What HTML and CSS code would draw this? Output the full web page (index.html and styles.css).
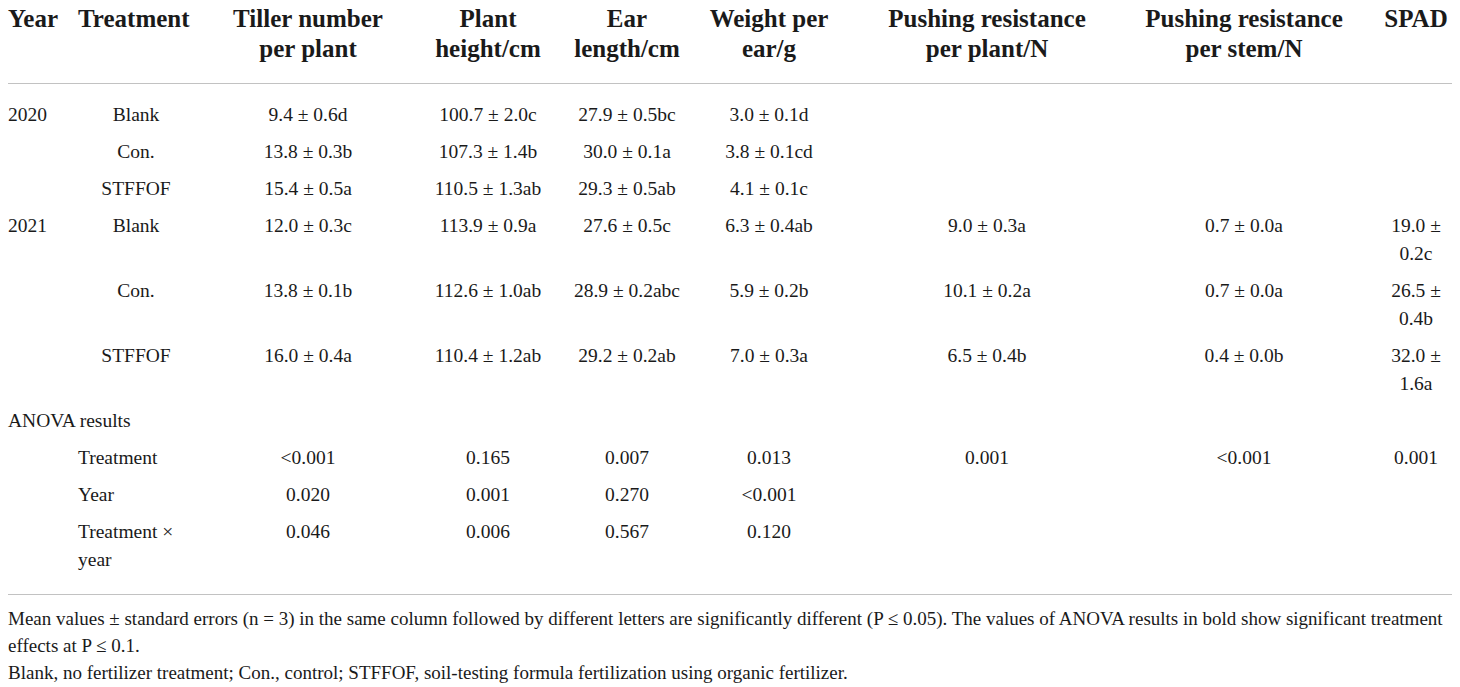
FILE: index.html
```html
<!DOCTYPE html>
<html lang="en">
<head>
    <meta charset="UTF-8">
    <meta name="viewport" content="width=device-width, initial-scale=1.0">
    <title>Table</title>
    <link rel="stylesheet" href="styles.css">
</head>
<body>
    <table class="data-table">
        <colgroup>
            <col class="c-year">
            <col class="c-treat">
            <col class="c-tiller">
            <col class="c-height">
            <col class="c-ear">
            <col class="c-weight">
            <col class="c-push-plant">
            <col class="c-push-stem">
            <col class="c-spad">
        </colgroup>
        <thead>
            <tr>
                <th class="left">Year</th>
                <th class="left pad">Treatment</th>
                <th>Tiller number<br>per plant</th>
                <th>Plant<br>height/cm</th>
                <th>Ear<br>length/cm</th>
                <th>Weight per<br>ear/g</th>
                <th>Pushing resistance<br>per plant/N</th>
                <th>Pushing resistance<br>per stem/N</th>
                <th class="spad">SPAD</th>
            </tr>
        </thead>
        <tbody>
            <tr class="first">
                <td class="left">2020</td>
                <td>Blank</td>
                <td>9.4 ± 0.6d</td>
                <td>100.7 ± 2.0c</td>
                <td>27.9 ± 0.5bc</td>
                <td>3.0 ± 0.1d</td>
                <td></td>
                <td></td>
                <td class="spad"></td>
            </tr>
            <tr>
                <td></td>
                <td>Con.</td>
                <td>13.8 ± 0.3b</td>
                <td>107.3 ± 1.4b</td>
                <td>30.0 ± 0.1a</td>
                <td>3.8 ± 0.1cd</td>
                <td></td>
                <td></td>
                <td class="spad"></td>
            </tr>
            <tr>
                <td></td>
                <td>STFFOF</td>
                <td>15.4 ± 0.5a</td>
                <td>110.5 ± 1.3ab</td>
                <td>29.3 ± 0.5ab</td>
                <td>4.1 ± 0.1c</td>
                <td></td>
                <td></td>
                <td class="spad"></td>
            </tr>
            <tr>
                <td class="left">2021</td>
                <td>Blank</td>
                <td>12.0 ± 0.3c</td>
                <td>113.9 ± 0.9a</td>
                <td>27.6 ± 0.5c</td>
                <td>6.3 ± 0.4ab</td>
                <td>9.0 ± 0.3a</td>
                <td>0.7 ± 0.0a</td>
                <td class="spad">19.0 ± 0.2c</td>
            </tr>
            <tr>
                <td></td>
                <td>Con.</td>
                <td>13.8 ± 0.1b</td>
                <td>112.6 ± 1.0ab</td>
                <td>28.9 ± 0.2abc</td>
                <td>5.9 ± 0.2b</td>
                <td>10.1 ± 0.2a</td>
                <td>0.7 ± 0.0a</td>
                <td class="spad">26.5 ± 0.4b</td>
            </tr>
            <tr>
                <td></td>
                <td>STFFOF</td>
                <td>16.0 ± 0.4a</td>
                <td>110.4 ± 1.2ab</td>
                <td>29.2 ± 0.2ab</td>
                <td>7.0 ± 0.3a</td>
                <td>6.5 ± 0.4b</td>
                <td>0.4 ± 0.0b</td>
                <td class="spad">32.0 ± 1.6a</td>
            </tr>
            <tr>
                <td class="left" colspan="9">ANOVA results</td>
            </tr>
            <tr>
                <td></td>
                <td class="left pad">Treatment</td>
                <td>&lt;0.001</td>
                <td>0.165</td>
                <td>0.007</td>
                <td>0.013</td>
                <td>0.001</td>
                <td>&lt;0.001</td>
                <td class="spad">0.001</td>
            </tr>
            <tr>
                <td></td>
                <td class="left pad">Year</td>
                <td>0.020</td>
                <td>0.001</td>
                <td>0.270</td>
                <td>&lt;0.001</td>
                <td></td>
                <td></td>
                <td class="spad"></td>
            </tr>
            <tr class="last">
                <td></td>
                <td class="left pad">Treatment × year</td>
                <td>0.046</td>
                <td>0.006</td>
                <td>0.567</td>
                <td>0.120</td>
                <td></td>
                <td></td>
                <td class="spad"></td>
            </tr>
        </tbody>
    </table>
    <div class="footnote">
        <p>Mean values ± standard errors (n = 3) in the same column followed by different letters are significantly different (P ≤ 0.05). The values of ANOVA results in bold show significant treatment effects at P ≤ 0.1.</p>
        <p>Blank, no fertilizer treatment; Con., control; STFFOF, soil-testing formula fertilization using organic fertilizer.</p>
    </div>
</body>
</html>
```

FILE: styles.css
```css
body {
    font-family: "Liberation Serif", "Times New Roman", serif;
    color: #1a1a1a;
    background-color: #fff;
    margin: 0;
    padding: 0 8px;
}
.data-table {
    width: 1444px;
    table-layout: fixed;
    border-collapse: collapse;
    border-bottom: 1px solid #c2c2c2;
    font-size: 19.5px;
    line-height: 28px;
}
.c-year { width: 62px; }
.c-treat { width: 132px; }
.c-tiller { width: 212px; }
.c-height { width: 148px; }
.c-ear { width: 130px; }
.c-weight { width: 154px; }
.c-push-plant { width: 282px; }
.c-push-stem { width: 232px; }
.c-spad { width: 92px; }
.data-table th {
    font-size: 25px;
    line-height: 30px;
    font-weight: bold;
    text-align: center;
    vertical-align: top;
    padding: 4px 0 19px;
    border-bottom: 1px solid #c2c2c2;
    white-space: nowrap;
}
.data-table td {
    text-align: center;
    vertical-align: top;
    padding: 4.5px 0;
}
.data-table .left {
    text-align: left;
}
.data-table .pad {
    padding-left: 8px;
}
.data-table .spad {
    padding-left: 20px;
}
.data-table tr.first td {
    padding-top: 17px;
}
.data-table tr.last td {
    padding-bottom: 20px;
}
.footnote {
    margin-top: 9.5px;
    font-size: 19px;
    line-height: 27px;
}
.footnote p {
    margin: 0;
}
```
